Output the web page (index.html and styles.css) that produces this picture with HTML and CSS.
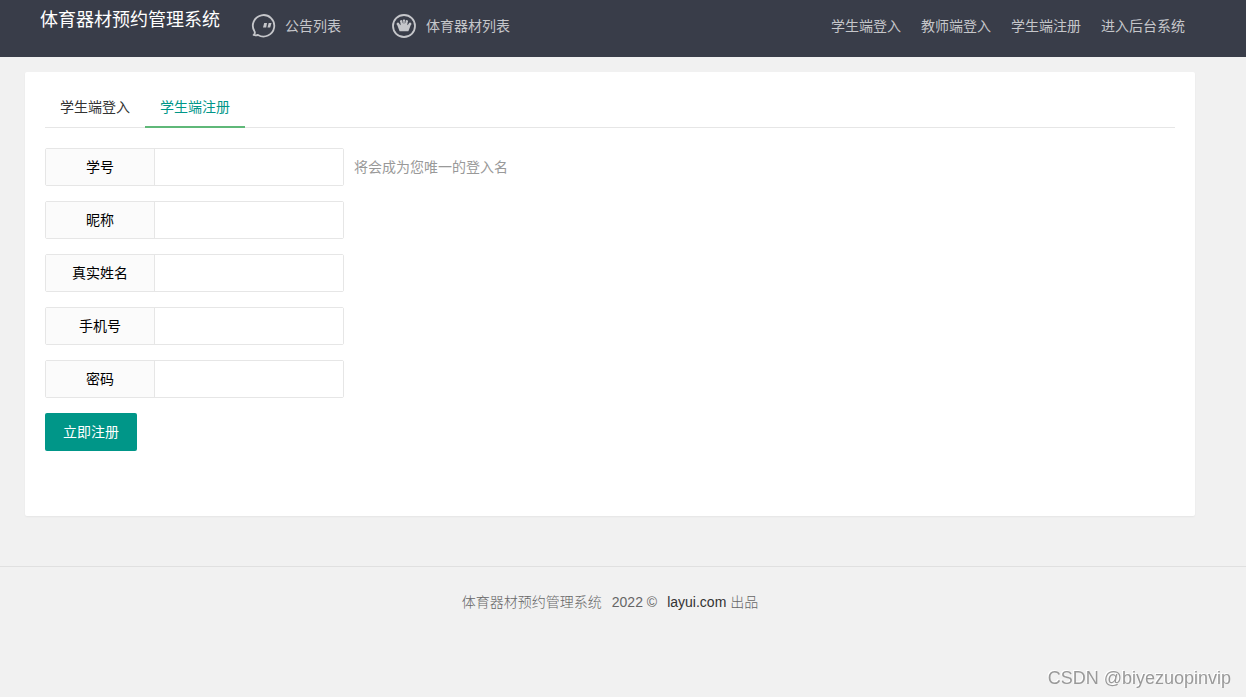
FILE: index.html
```html
<!DOCTYPE html>
<html lang="zh-CN">
<head>
<meta charset="utf-8">
<meta name="viewport" content="width=device-width, initial-scale=1">
<title>体育器材预约管理系统</title>
<link rel="stylesheet" href="styles.css">
</head>
<body>
<header class="header">
  <div class="container header-inner">
    <a class="brand" href="#">体育器材预约管理系统</a>
    <nav class="main-nav">
      <a href="#">
        <svg class="nav-icon" viewBox="0 0 24 24" aria-hidden="true">
          <path d="M3.600 17.600A10.700 10.700 0 1 1 7 20.900C5.800 21.400 4.200 21.500 2.600 20.900C3.600 20.300 4.200 19.200 3.600 17.600Z" fill="none" stroke="currentColor" stroke-width="1.800" stroke-linejoin="round"/>
          <path d="M13.200 9h2.800l-.8 4.600h-3.200zM17.700 9h2.800l-1.300 4.600h-2.700z" fill="currentColor"/>
        </svg>
        <span>公告列表</span>
      </a>
      <a href="#">
        <svg class="nav-icon" viewBox="0 0 24 24" aria-hidden="true">
          <circle cx="12" cy="12" r="11" fill="none" stroke="currentColor" stroke-width="1.800"/>
          <path d="M7.600 17.200L5.300 11.200A1.400 1.400 0 1 1 7.400 9.900L8.800 11.200L8.300 8.300A1.300 1.300 0 1 1 10.400 8L11.300 10L11.200 7.200A1.100 1.100 0 1 1 12.800 7.200L12.700 10L13.600 8A1.300 1.300 0 1 1 15.700 8.300L15.200 11.200L16.600 9.900A1.400 1.400 0 1 1 18.700 11.200L16.400 17.200Z" fill="currentColor"/>
        </svg>
        <span>体育器材列表</span>
      </a>
    </nav>
    <nav class="user-nav">
      <a href="#">学生端登入</a>
      <a href="#">教师端登入</a>
      <a href="#">学生端注册</a>
      <a href="#">进入后台系统</a>
    </nav>
  </div>
</header>
<main class="main">
  <section class="container panel">
    <nav class="tabs">
      <a class="tab" href="#">学生端登入</a>
      <a class="tab tab-active" href="#" aria-current="page">学生端注册</a>
    </nav>
    <form class="form">
      <div class="form-row">
        <div class="field">
          <label for="number">学号</label>
          <input id="number" type="text">
        </div>
        <span class="hint">将会成为您唯一的登入名</span>
      </div>
      <div class="form-row">
        <div class="field">
          <label for="nickname">昵称</label>
          <input id="nickname" type="text">
        </div>
      </div>
      <div class="form-row">
        <div class="field">
          <label for="realname">真实姓名</label>
          <input id="realname" type="text">
        </div>
      </div>
      <div class="form-row">
        <div class="field">
          <label for="phone">手机号</label>
          <input id="phone" type="text">
        </div>
      </div>
      <div class="form-row">
        <div class="field">
          <label for="password">密码</label>
          <input id="password" type="password">
        </div>
      </div>
      <button class="submit" type="button">立即注册</button>
    </form>
  </section>
</main>
<footer class="footer">
  <p><span>体育器材预约管理系统</span><span>2022 ©</span><span><a href="#">layui.com</a> 出品</span></p>
</footer>
<div class="watermark">CSDN @biyezuopinvip</div>
</body>
</html>
```
FILE: styles.css
```css
* {
  box-sizing: border-box;
}

body {
  margin: 0;
  min-height: 100vh;
  background: #f1f1f1;
  color: #000;
  font: 14px/24px "Liberation Sans", "Noto Sans CJK SC", sans-serif;
}

a {
  color: inherit;
  text-decoration: none;
}

.header,
.main,
.footer {
  padding-right: 26px;
}

.container {
  width: 100%;
  max-width: 1170px;
  margin: 0 auto;
}

.header {
  background: #393d49;
  color: #c5c6ca;
}

.header-inner {
  display: flex;
  align-items: flex-start;
  height: 57px;
  padding: 0 10px 0 15px;
}

.brand {
  padding-top: 8px;
  color: #fff;
  font-size: 18px;
}

.main-nav {
  display: flex;
  gap: 51px;
  padding: 14px 0 0 31px;
}

.main-nav a {
  display: flex;
  align-items: center;
  gap: 10px;
}

.nav-icon {
  width: 24px;
  height: 24px;
  overflow: visible;
}

.user-nav {
  display: flex;
  gap: 20px;
  margin-left: auto;
  padding-top: 14px;
}

.main {
  padding-top: 15px;
}

.panel {
  padding: 15px 20px 65px;
  background: #fff;
  border-radius: 2px;
  box-shadow: 0 1px 2px rgba(0, 0, 0, 0.05);
}

.tabs {
  display: flex;
  border-bottom: 1px solid #e6e6e6;
}

.tab {
  height: 41px;
  margin-bottom: -1px;
  padding: 0 15px;
  line-height: 40px;
  color: #333;
}

.tab-active {
  border-bottom: 2px solid #5fb878;
  color: #009688;
}

.form {
  padding-top: 20px;
}

.form-row {
  display: flex;
  align-items: center;
  gap: 10px;
  margin-bottom: 15px;
}

.field {
  display: flex;
  width: 299px;
  height: 38px;
  border: 1px solid #e6e6e6;
  border-radius: 2px;
}

.field label {
  width: 109px;
  border-right: 1px solid #e6e6e6;
  background: #fbfbfb;
  line-height: 36px;
  text-align: center;
}

.field input {
  flex: 1;
  min-width: 0;
  padding: 0 10px;
  border: 0;
  background: #fff;
  font: inherit;
}

.hint {
  color: #999;
}

.submit {
  display: block;
  height: 38px;
  padding: 0 18px;
  border: 0;
  border-radius: 2px;
  background: #009688;
  color: #fff;
  font: inherit;
}

.footer {
  margin-top: 50px;
  padding-top: 23px;
  border-top: 1px solid #e0e0e0;
  color: #666;
  font-weight: 300;
}

.footer p {
  display: flex;
  justify-content: center;
  gap: 10px;
  margin: 0;
}

.footer a {
  color: #333;
}

.watermark {
  position: fixed;
  right: 15px;
  bottom: 7px;
  color: #999;
  font-size: 18px;
  text-shadow: -1px -1px 0 #fff;
}
```
